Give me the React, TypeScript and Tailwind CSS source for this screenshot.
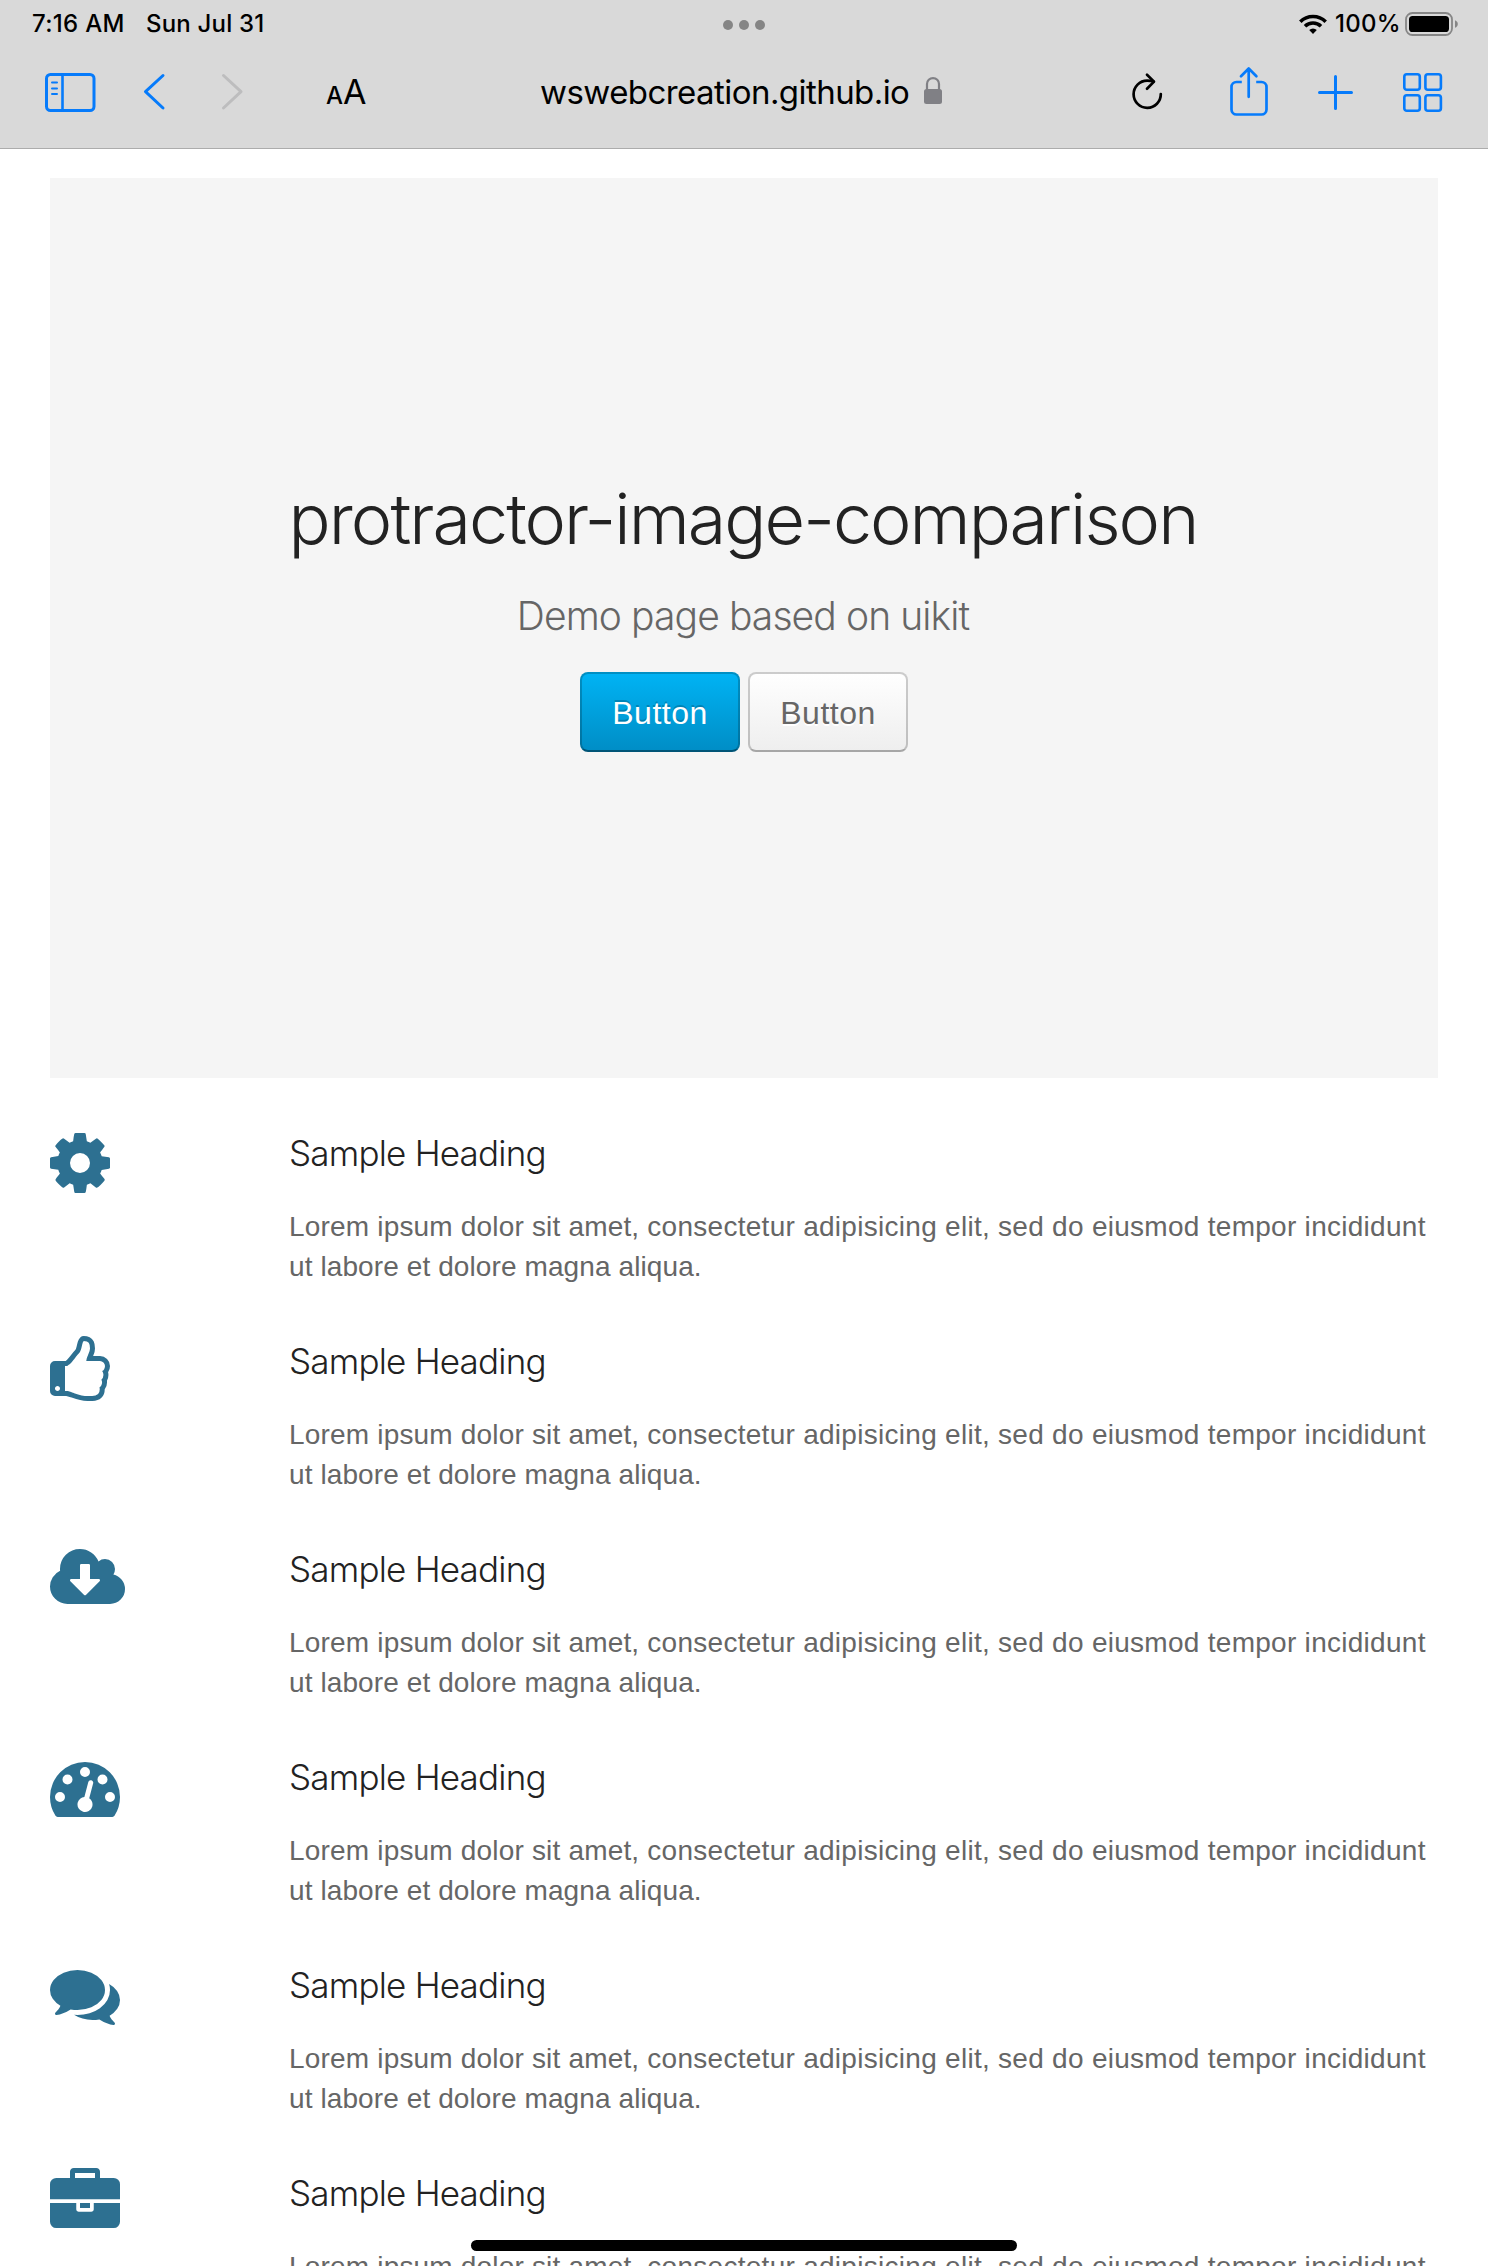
import React from "react";

// Feature glyphs, drawn on a 1792-unit em.
const FEATURES = [
  {
    name: "cog",
    viewBox: "128 0 1792 1792",
    width: "w-[70px]",
    d: "M1152 896q0-106-75-181t-181-75-181 75-75 181 75 181 181 75 181-75 75-181zm512-109v222q0 12-8 23t-20 13l-185 28q-19 54-39 91 35 50 107 138 10 12 10 25t-9 23q-27 37-99 108t-94 71q-12 0-26-9l-138-108q-44 23-91 38-16 136-29 186-7 28-36 28h-222q-14 0-24.500-8.500t-11.500-21.500l-28-184q-49-16-90-37l-141 107q-10 9-25 9-14 0-25-11-126-114-165-168-7-10-7-23 0-12 8-23 15-21 51-66.500t54-70.500q-27-50-41-99l-183-27q-13-2-21-12.500t-8-23.500v-222q0-12 8-23t19-13l186-28q14-46 39-92-40-57-107-138-10-12-10-24 0-10 9-23 26-36 98.500-107.500t94.500-71.500q13 0 26 10l138 107q44-23 91-38 16-136 29-186 7-28 36-28h222q14 0 24.500 8.500t11.500 21.500l28 184q49 16 90 37l142-107q9-9 24-9 13 0 25 10 129 119 165 170 7 8 7 22 0 12-8 23-15 21-51 66.500t-54 70.500q26 50 41 98l183 28q13 2 21 12.500t8 23.500z",
  },
  {
    name: "thumbs-up",
    viewBox: "128 0 1792 1792",
    width: "w-[70px]",
    d: "M384 1344q0-26-19-45t-45-19-45 19-19 45 19 45 45 19 45-19 19-45zm1152-576q0-51-39-89.500t-89-38.500h-352q0-58 48-159.500t48-160.500q0-98-32-145t-128-47q-26 26-38 85t-30.500 125.500-59.500 109.500q-22 23-77 91-4 5-23 30t-31.500 41-34.500 42.500-40 44-38.500 35.500-40 27-35.500 9h-32v640h32q13 0 31.500 3t33 6.500 38 11 35 11.500 35.500 12.500 29 10.500q211 73 342 73h121q192 0 192-167 0-26-5-56 30-16 47.500-52.500t17.500-73.500-18-69q53-50 53-119 0-25-10-55.500t-25-47.500q32-1 53.500-47t21.500-81zm128-1q0 89-49 163 9 33 9 69 0 77-38 144 3 21 3 43 0 101-60 178 1 139-85 219.500t-227 80.500h-129q-96 0-189.500-22.500t-216.500-65.500q-116-40-138-40h-288q-53 0-90.500-37.500t-37.500-90.500v-640q0-53 37.500-90.500t90.500-37.500h274q36-24 137-155 58-75 107-128 24-25 35.500-85.500t30.500-126.500 62-108q39-37 90-37 84 0 151 32.500t102 101.500 35 186q0 93-48 192h176q104 0 180 76t76 179z",
  },
  {
    name: "cloud-download",
    viewBox: "0 0 1920 1792",
    width: "w-[75px]",
    d: "M1280 928q0-14-9-23t-23-9h-224v-352q0-13-9.500-22.500t-22.500-9.500h-192q-13 0-22.500 9.500t-9.500 22.500v352h-224q-13 0-22.500 9.500t-9.500 22.500q0 14 9 23l352 352q9 9 23 9t23-9l351-351q10-12 10-24zm640 224q0 159-112.500 271.500t-271.500 112.500h-1088q-185 0-316.500-131.500t-131.500-316.500q0-130 70-240t188-165q-2-30-2-43 0-212 150-362t362-150q156 0 285.500 87t188.500 231q71-62 166-62 106 0 181 75t75 181q0 76-41 138 130 31 213.500 135.500t83.500 238.500z",
  },
  {
    name: "tachometer",
    viewBox: "0 0 1792 1792",
    width: "w-[70px]",
    d: "M384 1152q0-53-37.500-90.500t-90.500-37.500-90.500 37.500-37.500 90.500 37.500 90.500 90.500 37.500 90.500-37.500 37.500-90.500zm192-448q0-53-37.500-90.500t-90.500-37.500-90.500 37.500-37.500 90.500 37.500 90.500 90.500 37.500 90.500-37.500 37.500-90.500zm428 481l101-382q6-26-7.500-48.500t-38.500-29.500-48 6.500-30 39.500l-101 382q-60 5-107 43.500t-63 98.500q-20 77 20 146t117 89 146-20 89-117q16-60-6-117t-72-91zm660-33q0-53-37.500-90.500t-90.500-37.500-90.500 37.500-37.500 90.500 37.500 90.500 90.500 37.500 90.500-37.500 37.500-90.500zm-640-640q0-53-37.500-90.500t-90.500-37.500-90.500 37.500-37.500 90.500 37.500 90.500 90.500 37.500 90.500-37.500 37.500-90.500zm448 192q0-53-37.500-90.500t-90.500-37.500-90.500 37.500-37.500 90.500 37.500 90.500 90.500 37.500 90.500-37.500 37.500-90.500zm320 448q0 261-141 483-19 29-54 29h-1402q-35 0-54-29-141-221-141-483 0-182 71-348t191-286 286-191 348-71 348 71 286 191 191 286 71 348z",
  },
  {
    name: "comments",
    viewBox: "0 0 1792 1792",
    width: "w-[70px]",
    d: "M1408 768q0 139-94 257t-256.500 186.500-353.500 68.500q-86 0-176-16-124 88-278 128-36 9-86 16h-3q-11 0-20.500-8t-11.500-21q-1-3-1-6.500t.5-6.5 2-6l2.500-5 3.500-5.500 4-5 4.500-5 4-4.500q5-6 23-25t26-29.500 22.500-29 25-38.500 20.500-44q-124-72-195-177t-71-224q0-139 94-257t256.500-186.500 353.500-68.500 353.500 68.500 256.500 186.500 94 257zm384 256q0 120-71 224.500t-195 176.500q10 24 20.500 44t25 38.500 22.500 29 26 29.500 23 25q1 1 4 4.500t4.500 5 4 5 3.500 5.500l2.500 5 2 6 .5 6.500-1 6.500q-3 14-13 22t-22 7q-50-7-86-16-154-40-278-128-90 16-176 16-271 0-472-132 58 4 88 4 161 0 309-45t264-129q125-92 192-212t67-254q0-77-23-152 129 71 204 178t75 230z",
  },
  {
    name: "briefcase",
    viewBox: "0 0 1792 1792",
    width: "w-[70px]",
    d: "M640 256h512v-128h-512v128zm1152 640v480q0 66-47 113t-113 47h-1472q-66 0-113-47t-47-113v-480h672v160q0 26 19 45t45 19h320q26 0 45-19t19-45v-160h672zm-768 0v128h-256v-128h256zm768-480v384h-1792v-384q0-66 47-113t113-47h352v-160q0-40 28-68t68-28h576q40 0 68 28t28 68v160h352q66 0 113 47t47 113z",
  },
];

function StatusBar() {
  return (
    <div className="grid h-12 grid-cols-[1fr_42px_1fr] items-center pr-[29px] pl-[32px] text-[24px] leading-[48px] font-medium text-black">
      <div className="flex whitespace-nowrap">
        <span className="w-[114px] tracking-[0.3px]">7:16 AM</span>
        <span className="tracking-[0.2px]">Sun Jul 31</span>
      </div>
      <div className="-ml-[2px] flex w-[42px] justify-between pt-[2px]">
        <i className="size-[10px] rounded-full bg-[#858585]" />
        <i className="size-[10px] rounded-full bg-[#858585]" />
        <i className="size-[10px] rounded-full bg-[#858585]" />
      </div>
      <div className="flex items-center justify-end">
        <svg className="h-5 w-7" viewBox="0 0 28 20" fill="none" stroke="#000" strokeWidth="3.6">
          <path d="M1.300 7.700a18.200 18.200 0 0 1 25.400 0" />
          <path d="M6 12.300a11.500 11.500 0 0 1 16 0" />
          <path d="M14 20l-3.800-3.900a5.400 5.400 0 0 1 7.600 0z" fill="#000" stroke="none" />
        </svg>
        <span className="ml-[8px] w-[70px] whitespace-nowrap tracking-[0.3px]">100%</span>
        <svg className="h-6 w-[54px]" viewBox="0 0 54 24">
          <rect x="1" y="1" width="46" height="22" rx="6.500" fill="none" stroke="#868686" strokeWidth="1.800" />
          <rect x="4" y="4" width="40" height="16" rx="3.600" fill="#000" />
          <path d="M50 8.200c1.800.7 2.800 2.100 2.800 3.800s-1 3.100-2.800 3.800z" fill="#868686" />
        </svg>
      </div>
    </div>
  );
}

function Toolbar() {
  const line = {
    fill: "none",
    stroke: "#067bfb",
    strokeWidth: 3,
    strokeLinecap: "round" as const,
    strokeLinejoin: "round" as const,
  };
  return (
    <div className="flex h-[88px] items-center pl-[44px]">
      <svg className="h-[60px] w-[52px]" viewBox="0 0 52 60" {...line}>
        <rect x="2.500" y="12.500" width="47.500" height="36" rx="4" />
        <path d="M18.500 12.500v36" strokeWidth="2.600" />
        <path d="M8 20.600h5M8 26.600h5M8 32h5" strokeWidth="2" />
      </svg>
      <svg className="ml-[46px] h-[60px] w-[26px]" viewBox="0 0 26 60" {...line}>
        <path d="M21 13.500L3.500 29.700L21 46" />
      </svg>
      <svg className="ml-[52px] h-[60px] w-[26px]" viewBox="0 0 26 60" {...line} stroke="#bdbdbe">
        <path d="M3.500 13.500L21 29.700L3.500 46" />
      </svg>
      <div className="ml-[80px] flex w-[214px] items-baseline pt-[3px] font-medium text-black">
        <span className="text-[24px] leading-[60px]">A</span>
        <span className="text-[34px] leading-[60px] font-normal">A</span>
      </div>
      <div className="w-[384px] text-[33px] leading-[60px] tracking-[-0.56px] whitespace-nowrap text-black">
        wswebcreation.github.io
      </div>
      <svg className="h-[60px] w-[18px]" viewBox="0 0 18 60">
        <path d="M3 28v-6a6 5.900 0 0 1 12 0v6" fill="none" stroke="#808085" strokeWidth="2.200" />
        <rect y="27" width="18" height="15" rx="2.500" fill="#808085" />
      </svg>
      <svg className="ml-[190px] h-[60px] w-[32px]" viewBox="0 0 32 60" {...line} stroke="#000" strokeWidth={2.700}>
        <path d="M28.800 32a13.600 13.600 0 1 1-13.600-13.400q3.300 0 6.300.9" />
        <path d="M15 12.700l7 6.900-7 7.200" />
      </svg>
      <svg className="ml-[65px] h-[60px] w-[40px]" viewBox="0 0 40 60" {...line} strokeWidth={2.700}>
        <path d="M12.800 20H7.500a5 5 0 0 0-5 5v22.500a5 5 0 0 0 5 5h25a5 5 0 0 0 5-5V25a5 5 0 0 0-5-5h-5.300" strokeLinecap="butt" />
        <path d="M19.700 34.800V7M12 14.200l7.700-7.700 7.700 7.700" />
      </svg>
      <svg className="ml-[48px] h-[60px] w-[36px]" viewBox="0 0 36 60" {...line}>
        <path d="M2.500 30.500h32M18.500 14.500v32" />
      </svg>
      <svg className="ml-[50px] h-[60px] w-[40px]" viewBox="0 0 40 60" {...line} strokeWidth={2.600}>
        <rect x="1.300" y="12.300" width="15.500" height="15.500" rx="2.500" />
        <rect x="22.400" y="12.300" width="15.500" height="15.500" rx="2.500" />
        <rect x="1.300" y="33.200" width="15.500" height="15.500" rx="2.500" />
        <rect x="22.400" y="33.200" width="15.500" height="15.500" rx="2.500" />
      </svg>
    </div>
  );
}

export default function App() {
  return (
    <div className="relative h-[2266px] w-[1488px] overflow-hidden bg-white font-['Liberation_Sans',Arial,sans-serif]">
      <header className="h-[149px] border-b border-[#acacac] bg-[#d9d9d9] font-[Inter,sans-serif]">
        <StatusBar />
        <Toolbar />
      </header>

      <main className="px-[50px] pt-[29px]">
        <section className="flex h-[900px] flex-col items-center bg-[#f5f5f5] pt-[299px]">
          <h1 className="h-[84px] pr-[2px] font-[Inter,sans-serif] text-[70px] leading-[84px] font-light tracking-[-1.95px] whitespace-nowrap text-[#222]">
            protractor-image-comparison
          </h1>
          <p className="mt-[25px] h-[60px] pr-[2px] font-[Inter,sans-serif] text-[39px] leading-[60px] font-light tracking-[-0.9px] whitespace-nowrap text-[#666]">
            Demo page based on uikit
          </p>
          <div className="mt-[26px] flex gap-2">
            <button className="h-20 w-40 rounded-lg border-2 border-black/20 border-b-black/40 bg-linear-to-b from-[#00b4f5] to-[#008dc5] bg-origin-border pt-[2px] text-[32px] leading-[74px] tracking-[0.5px] text-white [text-shadow:0_-2px_0_rgba(0,0,0,0.2)]">
              Button
            </button>
            <button className="h-20 w-40 rounded-lg border-2 border-black/20 border-b-black/30 bg-linear-to-b from-white to-[#eee] bg-origin-border pt-[2px] text-[32px] leading-[74px] tracking-[0.5px] text-[#666] [text-shadow:0_2px_0_#fff]">
              Button
            </button>
          </div>
        </section>

        <section className="pt-[50px]">
          {FEATURES.map((f) => (
            <article key={f.name} className="flex h-[208px]">
              <div className="w-[239px] shrink-0">
                <svg className={`h-[70px] ${f.width}`} viewBox={f.viewBox} fill="#2d7091">
                  <path d={f.d} />
                </svg>
              </div>
              <div className="whitespace-nowrap">
                <h3 className="h-[50px] font-[Inter,sans-serif] text-[35px] leading-[50px] font-light tracking-[-0.8px] text-[#222]">
                  Sample Heading
                </h3>
                <p className="mt-[29px] text-[28px] leading-[40px] tracking-[0.1px] text-[#666]">
                  <span className="tracking-[0.18px]">Lorem ipsum dolor sit amet, </span>
                  <span className="tracking-[0.28px]">
                    consectetur adipisicing elit, sed do eiusmod tempor incididunt
                  </span>
                  <br />
                  ut labore et dolore magna aliqua.
                </p>
              </div>
            </article>
          ))}
        </section>
      </main>

      <div className="absolute top-[2240px] left-[471px] h-[11px] w-[546px] rounded-full bg-black" />
    </div>
  );
}
